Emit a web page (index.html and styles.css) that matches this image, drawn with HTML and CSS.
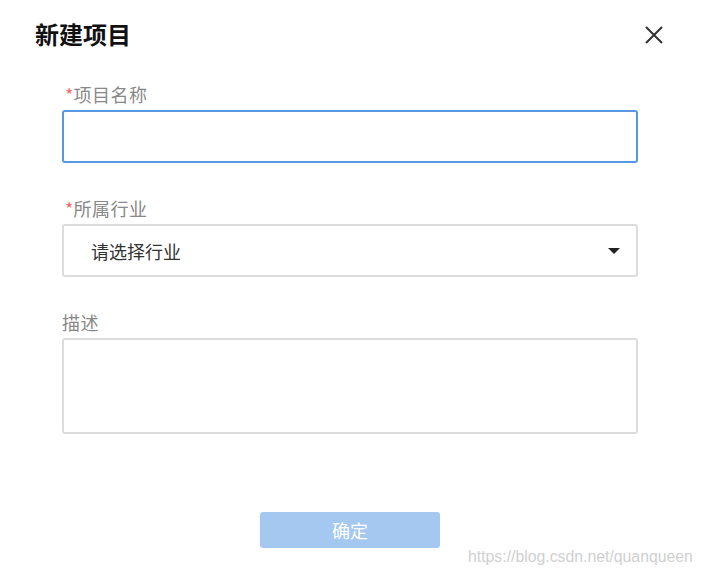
FILE: index.html
```html
<!DOCTYPE html>
<html lang="zh-CN">
<head>
<meta charset="utf-8">
<title>新建项目</title>
<link rel="stylesheet" href="styles.css">
</head>
<body>
<div class="dialog">
  <div class="header">
    <div class="title">新建项目</div>
    <svg class="close" width="20" height="20" viewBox="0 0 20 20"><path d="M2 2L18 18M18 2L2 18" stroke="#333" stroke-width="2" fill="none"/></svg>
  </div>
  <form class="form">
    <div class="label req-label"><span class="req">*</span>项目名称</div>
    <div class="input focus"></div>
    <div class="label req-label gap"><span class="req">*</span>所属行业</div>
    <div class="input select"><span class="placeholder">请选择行业</span><span class="caret"></span></div>
    <div class="label gap">描述</div>
    <div class="input textarea"></div>
    <div class="actions"><button type="button" class="btn">确定</button></div>
  </form>
  <div class="watermark">https://blog.csdn.net/quanqueen</div>
</div>
</body>
</html>
```
FILE: styles.css
```css
html, body { margin: 0; padding: 0; background: #fff; }
body { font-family: "Noto Sans CJK SC", "Noto Sans", sans-serif; }
.dialog { position: relative; width: 702px; height: 576px; box-sizing: border-box; }
.header { height: 68px; display: flex; align-items: center; justify-content: space-between; padding: 0 38px 0 35px; }
.title { font-size: 24px; font-weight: 700; color: #111; line-height: 1; }
.close { display: block; margin-top: 2px; }
.form { margin: 14px 0 0 62px; width: 576px; }
.label { font-size: 18px; line-height: 24px; height: 24px; color: #888; margin-bottom: 4px; letter-spacing: 0.5px; }
.req-label { padding-left: 3px; }
.label.gap { margin-top: 33px; }
.req { color: #f56c6c; letter-spacing: 0; }
.input { box-sizing: border-box; height: 53px; border: 2px solid #dcdcdc; border-radius: 3px; }
.input.focus { border-color: #5797e4; }
.select { display: flex; align-items: center; justify-content: space-between; padding: 0 16px 0 27px; }
.placeholder { font-size: 18px; color: #333; line-height: 24px; }
.caret { width: 0; height: 0; border-left: 6px solid transparent; border-right: 6px solid transparent; border-top: 6px solid #222; margin-top: 1px; }
.textarea { height: 96px; }
.actions { display: flex; justify-content: center; margin-top: 78px; }
.btn { width: 180px; height: 36px; border: none; border-radius: 3px; background: #a5c8f0; color: #fff; font-family: "Noto Sans CJK SC", sans-serif; font-size: 18px; padding: 0; line-height: 36px; }
.watermark { position: absolute; left: 468px; top: 547px; font-family: "Liberation Sans", Arial, sans-serif; font-size: 15.8px; line-height: 20px; color: #d0d0d0; text-shadow: 0 0 1px #fff; }
```
